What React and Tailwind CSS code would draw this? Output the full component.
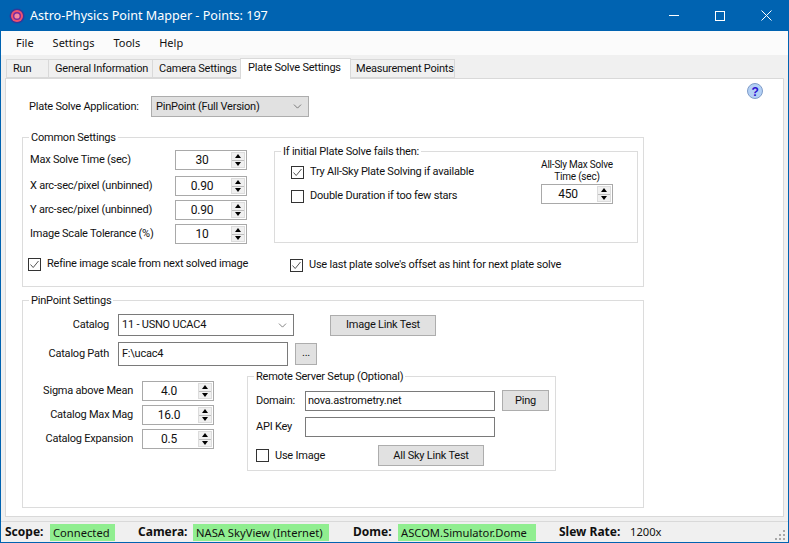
import { ChevronDown } from "lucide-react";

const Spinner = ({ value, className = "" }) => (
    <div className={`flex h-5 w-[72px] shrink-0 items-center border border-[#a9a9a9] bg-white text-[12px] ${className}`}>
        <span className="flex-1 pr-[3px] text-center">{value}</span>
        <div className="mr-px flex h-[16px] w-[14px] flex-col border border-[#dcdcdc] bg-[#f0f0f0]">
            <div className="flex flex-1 items-center justify-center border-b border-[#bdbdbd]">
                <div className="h-0 w-0 border-x-[3px] border-b-[4px] border-x-transparent border-b-black"></div>
            </div>
            <div className="flex flex-1 items-center justify-center">
                <div className="h-0 w-0 border-x-[3px] border-t-[4px] border-x-transparent border-t-black"></div>
            </div>
        </div>
    </div>
);

const Check = ({ checked, label, className = "" }) => (
    <div className={`flex items-center gap-[6px] ${className}`}>
        <div className="flex h-[13px] w-[13px] shrink-0 items-center justify-center border border-[#333] bg-white">
            {checked && (
                <svg width="11" height="11" viewBox="0 0 11 11">
                    <path d="M1.5 5.5 L4.2 8.5 L9.5 2" fill="none" stroke="#555" strokeWidth="1" />
                </svg>
            )}
        </div>
        <span className="whitespace-nowrap">{label}</span>
    </div>
);

const Btn = ({ children, className = "" }) => (
    <div className={`flex items-center justify-center border border-[#adadad] bg-[#e1e1e1] ${className}`}>
        {children}
    </div>
);

const Group = ({ title, className = "", children }) => (
    <div className={`border border-[#dcdcdc] ${className}`}>
        <div className="ml-[6px] -mt-[9px] h-[17px] w-fit whitespace-nowrap bg-white px-[2px] leading-[17px]">{title}</div>
        {children}
    </div>
);

const Status = ({ children, className = "" }) => (
    <span className={`shrink-0 whitespace-nowrap bg-[#90ee90] px-[3px] text-[11.2px] leading-[17px] ${className}`}>{children}</span>
);

const StatusLabel = ({ children, className = "" }) => (
    <b className={`shrink-0 whitespace-nowrap ${className}`}>{children}</b>
);

const WinBtn = ({ children }) => <div className="flex h-full w-[46px] items-center justify-center">{children}</div>;

const tabs = [
    ["Run", "w-[43px]"],
    ["General Information", "w-[105px]"],
    ["Camera Settings", "w-[89px]"],
];

export default function App() {
    return (
        <div className="flex h-[543px] w-[789px] flex-col overflow-hidden border-x border-b border-[#0063b1] bg-[#f0f0f0] font-['Roboto',sans-serif] text-[11px] leading-[16px] tracking-[-0.22px] text-[#111]">
            {/* title bar */}
            <div className="-mx-px flex h-[31px] shrink-0 items-center bg-[#0063b1] pl-[9px] font-['Noto_Sans',sans-serif] tracking-normal text-white">
                <svg width="16" height="16" viewBox="0 0 16 16">
                    <circle cx="8" cy="8" r="7.5" fill="#2f3a9c" />
                    <circle cx="8" cy="8" r="6" fill="#f0506e" />
                    <circle cx="8" cy="8" r="4" fill="#7a2a9c" />
                    <circle cx="8" cy="8" r="2.6" fill="#f58aa0" />
                </svg>
                <span className="ml-[5px] flex-1 text-[12.6px]">Astro-Physics Point Mapper - Points: 197</span>
                <WinBtn><div className="h-px w-[10px] bg-white"></div></WinBtn>
                <WinBtn><div className="h-[10px] w-[10px] border border-white"></div></WinBtn>
                <WinBtn>
                    <svg width="11" height="11" viewBox="0 0 11 11">
                        <path d="M0.5 0.5 L10.5 10.5 M10.5 0.5 L0.5 10.5" stroke="white" strokeWidth="1" />
                    </svg>
                </WinBtn>
            </div>

            {/* menu */}
            <div className="flex h-[24px] shrink-0 items-center gap-[19px] bg-[#fbfbfb] pl-[15px] font-['Noto_Sans',sans-serif] text-[11px] tracking-normal">
                <span>File</span>
                <span>Settings</span>
                <span>Tools</span>
                <span>Help</span>
            </div>

            {/* tabs */}
            <div className="flex h-[23px] shrink-0 items-end pl-[5px]">
                {tabs.map(([t, w]) => (
                    <div key={t} className={`-mr-px flex h-[19px] items-center border border-[#d9d9d9] bg-[#f0f0f0] pl-[6px] whitespace-nowrap ${w}`}>{t}</div>
                ))}
                <div className="relative z-10 -mb-px flex h-[21px] w-[111px] items-center border border-b-0 border-[#d9d9d9] bg-white pb-[3px] pl-[7px] whitespace-nowrap">Plate Solve Settings</div>
                <div className="-ml-px flex h-[19px] w-[105px] items-center border border-[#d9d9d9] bg-[#f0f0f0] pl-[5px] whitespace-nowrap">Measurement Points</div>
            </div>

            {/* tab page */}
            <div className="mx-[4px] flex h-[439px] shrink-0 flex-col border border-[#d9d9d9] bg-white pl-[16px]">
                <div className="flex items-start">
                    <div className="mt-[17px] ml-[7px] flex items-center">
                        <span className="w-[122px] whitespace-nowrap">Plate Solve Application:</span>
                        <div className="flex h-[21px] w-[158px] items-center justify-between border border-[#adadad] bg-[#e1e1e1] px-[4px]">
                            <span>PinPoint (Full Version)</span>
                            <ChevronDown size={13} strokeWidth={1.2} color="#444" />
                        </div>
                    </div>
                    <div className="mt-[4px] ml-[438px]">
                        <svg width="16" height="16" viewBox="0 0 16 16">
                            <circle cx="8" cy="8" r="7.5" fill="#b3d0f5" stroke="#7f9cc8" />
                            <text x="8" y="12.5" textAnchor="middle" fontSize="12" fontWeight="700" fill="#2a10d0" fontFamily="Liberation Sans">?</text>
                        </svg>
                    </div>
                </div>

                {/* common settings */}
                <Group title="Common Settings" className="mt-[20px] flex h-[150px] w-[622px] flex-col">
                    <div className="flex">
                        <div className="ml-[7px] flex w-[244px] flex-col gap-[4px] pt-[4px]">
                            {[
                                ["Max Solve Time (sec)", "30", "mb-[2px]"],
                                ["X arc-sec/pixel (unbinned)", "0.90", ""],
                                ["Y arc-sec/pixel (unbinned)", "0.90", ""],
                                ["Image Scale Tolerance (%)", "10", ""],
                            ].map(([label, value, extra]) => (
                                <div key={label} className={`flex items-center ${extra}`}>
                                    <span className="w-[145px] whitespace-nowrap">{label}</span>
                                    <Spinner value={value} />
                                </div>
                            ))}
                        </div>
                        <Group title="If initial Plate Solve fails then:" className="mt-[5px] h-[92px] w-[364px]">
                            <div className="flex">
                                <div className="ml-[16px] flex w-[250px] flex-col gap-[8px] pt-[4px]">
                                    <Check checked label="Try All-Sky Plate Solving if available" />
                                    <Check label="Double Duration if too few stars" />
                                </div>
                                <div className="flex w-[72px] flex-col items-center">
                                    <div className="-mt-[1px] w-[90px] shrink-0 text-center text-[10px] leading-[12px]">All-Sly Max Solve Time (sec)</div>
                                    <Spinner value="450" className="mt-[1px]" />
                                </div>
                            </div>
                        </Group>
                    </div>
                    <div className="mt-[11px] flex">
                        <Check checked label="Refine image scale from next solved image" className="ml-[5px] w-[262px]" />
                        <Check checked label="Use last plate solve's offset as hint for next plate solve" className="mt-[2px]" />
                    </div>
                </Group>

                {/* pinpoint settings */}
                <Group title="PinPoint Settings" className="mt-[13px] h-[208px] w-[622px]">
                    <div className="mt-[5px] flex items-center">
                        <span className="w-[86px] text-right">Catalog</span>
                        <div className="ml-[9px] flex h-[22px] w-[176px] items-center justify-between border border-[#7a7a7a] pr-[4px] pl-[3px]">
                            <span>11 - USNO UCAC4</span>
                            <ChevronDown size={13} strokeWidth={1.2} color="#444" />
                        </div>
                        <Btn className="ml-[36px] h-[21px] w-[106px]">Image Link Test</Btn>
                    </div>
                    <div className="mt-[6px] flex items-center">
                        <span className="w-[86px] text-right">Catalog Path</span>
                        <div className="ml-[9px] flex h-[24px] w-[170px] items-center border border-[#7a7a7a] pl-[3px]">F:\ucac4</div>
                        <Btn className="ml-[7px] h-[22px] w-[22px] pb-[3px]">...</Btn>
                    </div>
                    <div className="mt-[10px] flex items-start">
                        <div className="mt-[5px] flex flex-col gap-[4px]">
                            {[
                                ["Sigma above Mean", "4.0"],
                                ["Catalog Max Mag", "16.0"],
                                ["Catalog Expansion", "0.5"],
                            ].map(([label, value]) => (
                                <div key={label} className="flex items-center">
                                    <span className="w-[110px] text-right whitespace-nowrap">{label}</span>
                                    <Spinner value={value} className="ml-[9px]" />
                                </div>
                            ))}
                        </div>
                        <Group title="Remote Server Setup (Optional)" className="ml-[33px] h-[95px] w-[309px]">
                            <div className="mt-[5px] ml-[8px] flex items-center">
                                <span className="w-[49px]">Domain:</span>
                                <div className="flex h-[20px] w-[190px] items-center border border-[#7a7a7a] pl-[2px]">nova.astrometry.net</div>
                                <Btn className="ml-[7px] h-[21px] w-[47px]">Ping</Btn>
                            </div>
                            <div className="mt-[6px] ml-[8px] flex items-center">
                                <span className="w-[49px]">API Key</span>
                                <div className="h-[20px] w-[190px] border border-[#7a7a7a]"></div>
                            </div>
                            <div className="mt-[8px] ml-[8px] flex items-center">
                                <Check label="Use Image" className="w-[122px]" />
                                <Btn className="h-[21px] w-[106px]">All Sky Link Test</Btn>
                            </div>
                        </Group>
                    </div>
                </Group>
            </div>

            {/* status bar */}
            <div className="mt-[4px] flex flex-1 items-center border-t border-[#d9d9d9] pl-[4px] font-['Noto_Sans',sans-serif] text-[12px] tracking-normal">
                <StatusLabel className="w-[45px]">Scope:</StatusLabel>
                <Status className="w-[65px]">Connected</Status>
                <StatusLabel className="ml-[23px] w-[55px]">Camera:</StatusLabel>
                <Status className="w-[136px]">NASA SkyView (Internet)</Status>
                <StatusLabel className="ml-[24px] w-[45px]">Dome:</StatusLabel>
                <Status className="w-[138px]">ASCOM.Simulator.Dome</Status>
                <StatusLabel className="ml-[23px] w-[71px]">Slew Rate:</StatusLabel>
                <span className="flex-1 text-[11.2px]">1200x</span>
                <svg width="12" height="12" viewBox="0 0 12 12" className="mt-[8px] mr-[1px]">
                    <g fill="#a8a8a8">
                        <rect x="8" y="0" width="2" height="2" />
                        <rect x="4" y="4" width="2" height="2" />
                        <rect x="8" y="4" width="2" height="2" />
                        <rect x="0" y="8" width="2" height="2" />
                        <rect x="4" y="8" width="2" height="2" />
                        <rect x="8" y="8" width="2" height="2" />
                    </g>
                </svg>
            </div>
        </div>
    );
}
